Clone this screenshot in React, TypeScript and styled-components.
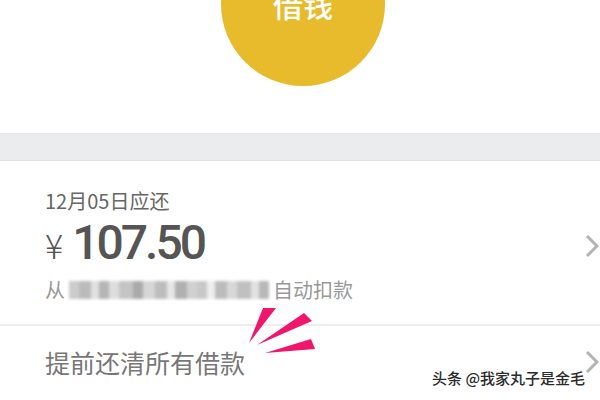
import { createGlobalStyle } from 'styled-components'
import styled from 'styled-components'

const GlobalStyle = createGlobalStyle`
  html, body {
    margin: 0;
    padding: 0;
    background: #fff;
    font-family: "Noto Sans CJK SC", "Noto Sans", sans-serif;
  }
`

const Page = styled.div`
  position: relative;
  width: 600px;
  height: 400px;
  overflow: hidden;
  background: #fff;
`

const Top = styled.div`
  height: 133px;
  display: flex;
  justify-content: center;
  overflow: hidden;
`

const BorrowButton = styled.div`
  width: 164px;
  height: 164px;
  margin-top: -78px;
  margin-left: 6px;
  border-radius: 50%;
  background: #e8bb2c;
  color: #fff;
  font-size: 30px;
  font-weight: 500;
  display: flex;
  align-items: center;
  justify-content: center;
`

const Band = styled.div`
  height: 26px;
  background: #ebecee;
  border-top: 1px solid #e2e3e6;
  border-bottom: 1px solid #e3e3e3;
`

const Row = styled.div<{ $pad: string; $last?: boolean }>`
  display: flex;
  align-items: center;
  justify-content: space-between;
  padding: ${(p) => p.$pad};
  border-bottom: ${(p) => (p.$last ? 'none' : '2px solid #ededed')};
`

const Bill = styled.div`
  display: flex;
  flex-direction: column;
`

const DueDate = styled.div`
  font-size: 20px;
  line-height: 22px;
  color: #666;
`

const Amount = styled.div`
  display: flex;
  align-items: baseline;
  margin-top: 9px;
  color: #555;
  line-height: 44px;
`

const Yen = styled.span`
  font-family: "Noto Sans CJK SC", sans-serif;
  font-size: 34px;
  font-weight: 300;
  margin-right: 9px;
`

const Number = styled.span`
  font-family: Roboto, "Liberation Sans", sans-serif;
  font-size: 48px;
  font-weight: 500;
  letter-spacing: -3px;
`

const Debit = styled.div`
  display: flex;
  align-items: center;
  margin-top: 11px;
  font-size: 20px;
  line-height: 24px;
  color: #999;
`

const Mosaic = styled.div`
  display: flex;
  width: 200px;
  height: 18px;
  margin: 0 4px 0 4px;
  filter: blur(1.6px);
`

const Cell = styled.span<{ $c: string; $w: number }>`
  width: ${(p) => p.$w}px;
  height: 100%;
  background: ${(p) => p.$c};
`

const Title = styled.div`
  font-size: 25px;
  line-height: 30px;
  color: #777;
`

const Chevron = styled.svg`
  width: 14px;
  height: 24px;
  flex: none;
  margin-right: 1px;
`

const Marks = styled.svg`
  position: absolute;
  left: 245px;
  top: 303px;
  width: 75px;
  height: 55px;
`

const Watermark = styled.div`
  position: absolute;
  left: 432px;
  top: 368px;
  font-size: 15px;
  font-weight: 500;
  line-height: 20px;
  color: #2b2b2b;
  text-shadow: 0 0 2px #fff, 0 0 2px #fff, 1px 1px 1px #fff;
`

const cells: [string, number][] = [
  ['#ccc', 10], ['#bbb', 12], ['#e0e0e0', 8], ['#b5b5b5', 10], ['#ddd', 10],
  ['#c4c4c4', 14], ['#aaa', 10], ['#d6d6d6', 12], ['#bdbdbd', 12], ['#e6e6e6', 8],
  ['#b0b0b0', 12], ['#d0d0d0', 10], ['#c8c8c8', 10], ['#eee', 8], ['#bcbcbc', 12],
  ['#d8d8d8', 10], ['#c0c0c0', 14], ['#e2e2e2', 8], ['#b8b8b8', 10],
]

const Arrow = () => (
  <Chevron viewBox="0 0 14 24">
    <path d="M2 2 L12 12 L2 22" fill="none" stroke="#b3b3b3" strokeWidth="3" />
  </Chevron>
)

export default function App() {
  return (
    <Page>
      <GlobalStyle />
      <Top>
        <BorrowButton>借钱</BorrowButton>
      </Top>
      <Band />
      <Row $pad="29px 0 22px 45px">
        <Bill>
          <DueDate>12月05日应还</DueDate>
          <Amount>
            <Yen>¥</Yen>
            <Number>107.50</Number>
          </Amount>
          <Debit>
            从
            <Mosaic>
              {cells.map(([c, w], i) => (
                <Cell key={i} $c={c} $w={w} />
              ))}
            </Mosaic>
            自动扣款
          </Debit>
        </Bill>
        <Arrow />
      </Row>
      <Row $pad="21px 0 21px 45px" $last>
        <Title>提前还清所有借款</Title>
        <Arrow />
      </Row>
      <Marks viewBox="0 0 75 55">
        <polygon points="18,5 31,5 4,40" fill="#f0166c" />
        <polygon points="59,10 67,18 12,42" fill="#f0166c" />
        <polygon points="66,36 70,46 20,50" fill="#f0166c" />
      </Marks>
      <Watermark>头条 @我家丸子是金毛</Watermark>
    </Page>
  )
}
